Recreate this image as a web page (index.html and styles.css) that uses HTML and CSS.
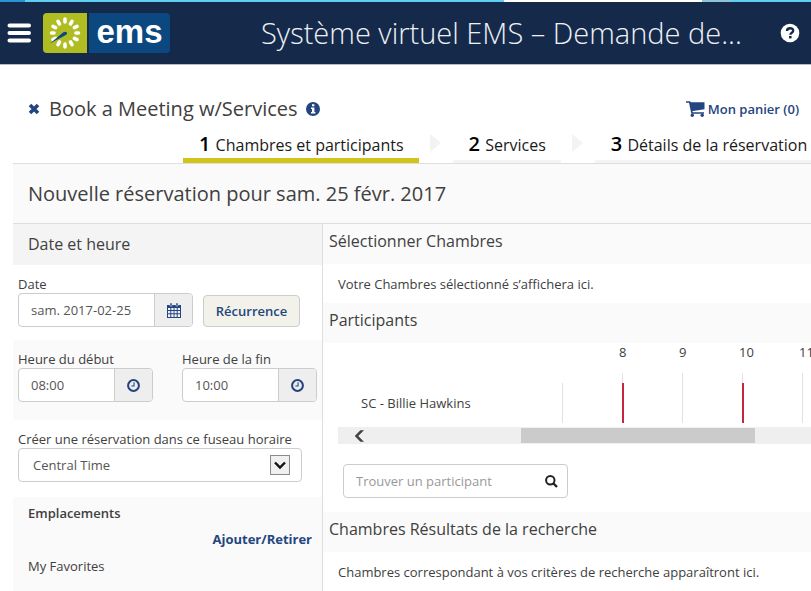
FILE: index.html
```html
<!DOCTYPE html>
<html lang="fr">
<head>
<meta charset="utf-8">
<meta name="viewport" content="width=device-width, initial-scale=1">
<title>Système virtuel EMS</title>
<link rel="stylesheet" href="styles.css">
</head>
<body>
<svg class="sprite" width="0" height="0" aria-hidden="true">
  <symbol id="clock" viewBox="0 0 12 12">
    <circle cx="6" cy="6" r="5" fill="none" stroke="currentColor" stroke-width="1.900"/>
    <path d="M6.500 3v3.500H4" fill="none" stroke="currentColor" stroke-width="1"/>
  </symbol>
</svg>

<div class="strip"><span class="strip-a"></span><span class="strip-b"></span><span class="strip-c"></span><span class="strip-d"></span><span class="strip-e"></span></div>

<header class="topbar">
  <button class="icon-btn menu" type="button" aria-label="Menu">
    <svg width="24" height="20" viewBox="0 0 24 20"><path d="M2.500 2.500h19.500M2.500 10h19.500M2.500 17.500h19.500" stroke="#fff" stroke-width="4" stroke-linecap="round"/></svg>
  </button>
  <a class="logo" href="#">
    <span class="logo-mark">
      <svg width="44" height="40" viewBox="0 0 44 40">
        <g stroke="#fff" stroke-width="3.600" stroke-linecap="round">
          <path d="M22 6v3M22 31v3M8.500 20h2.500M33 20h2.500"/>
          <path d="M15 8.400l1.500 2.600M29 8.400l-1.500 2.600M15 31.600l1.500-2.600M29 31.600l-1.500-2.600"/>
          <path d="M10 13.300l2.600 1.400M34 13.300l-2.600 1.400M10 26.700l2.600-1.400M34 26.700l-2.600-1.400"/>
        </g>
        <path d="M7 30.500L20 19.500c2-1.600 4.500-.6 4 1-.3 1-1.200 1.500-2 2z" fill="#0b4880"/>
      </svg>
    </span>
    <span class="logo-word">ems</span>
  </a>
  <h1>Système virtuel EMS – Demande de...</h1>
  <button class="icon-btn" type="button" aria-label="Aide">
    <svg width="20" height="20" viewBox="0 0 20 20"><circle cx="10" cy="10" r="9.300" fill="#fff"/><path d="M7 8c0-3.600 6.200-3.600 6.200-.3 0 2-2.800 2-2.800 4" fill="none" stroke="#152a4b" stroke-width="2.400"/><rect x="9" y="13" width="2.600" height="2.400" fill="#152a4b"/></svg>
  </button>
</header>

<main>
  <div class="booking">
    <button class="icon-btn" type="button" aria-label="Fermer">
      <svg width="12" height="12" viewBox="0 0 12 12"><path d="M2 2l8 8M10 2l-8 8" stroke="#24457f" stroke-width="3.600"/></svg>
    </button>
    <h2>Book a Meeting w/Services</h2>
    <button class="icon-btn" type="button" aria-label="Informations">
      <svg width="14" height="14" viewBox="0 0 14 14"><circle cx="7" cy="7" r="7" fill="#24457f"/><path d="M6 2.300h2.400v2H6zM5 5.500h3.400v4.500h1v1.500H5V10h1V7H5z" fill="#fff"/></svg>
    </button>
    <a class="cart" href="#">
      <svg width="19" height="18" viewBox="0 0 19 18"><path d="M0 2h3.700l2.300 11h12" fill="none" stroke="#24457f" stroke-width="1.600"/><path d="M3.800 2.300h14.700v7L5.500 11.300z" fill="#24457f"/><circle cx="6.300" cy="15.300" r="1.700" fill="#24457f"/><circle cx="16.200" cy="15.300" r="1.700" fill="#24457f"/></svg>
      Mon panier (0)
    </a>
  </div>

  <nav class="steps">
    <a class="step active" href="#"><b>1</b> Chambres et participants</a>
    <svg class="arrow" width="11" height="18" viewBox="0 0 11 18"><path d="M0 0l11 9-11 9z" fill="#f3f3f3"/></svg>
    <a class="step second" href="#"><b>2</b> Services</a>
    <svg class="arrow" width="11" height="18" viewBox="0 0 11 18"><path d="M0 0l11 9-11 9z" fill="#f3f3f3"/></svg>
    <a class="step last" href="#"><b>3</b> Détails de la réservation</a>
  </nav>

  <h2 class="heading">Nouvelle réservation pour sam. 25 févr. 2017</h2>

  <div class="columns">
    <form class="criteria">
      <h3>Date et heure</h3>
      <section class="row date">
        <div class="field">
          <label for="date">Date</label>
          <div class="group">
            <input id="date" type="text" value="sam. 2017-02-25">
            <button type="button" aria-label="Calendrier">
              <svg width="14" height="15" viewBox="0 0 14 15"><path d="M0 2h14v13H0z" fill="#24457f"/><path d="M3 0h2v3H3zM9 0h2v3H9z" fill="#24457f" stroke="#eee" stroke-width=".5"/><path d="M1 5h2.300v2H1zM4.300 5h2.300v2H4.300zM7.500 5h2.200v2H7.500zM10.700 5H13v2h-2.300zM1 8h2.300v2.300H1zM4.300 8h2.300v2.300H4.300zM7.500 8h2.200v2.300H7.500zM10.700 8H13v2.300h-2.300zM1 11.300h2.300V14H1zM4.300 11.300h2.300V14H4.300zM7.500 11.300h2.200V14H7.500zM10.700 11.300H13V14h-2.300z" fill="#f1f3f8"/></svg>
            </button>
          </div>
        </div>
        <button class="recurrence" type="button">Récurrence</button>
      </section>
      <section class="row times">
        <div class="field">
          <label for="start">Heure du début</label>
          <div class="group">
            <input id="start" type="text" value="08:00">
            <button type="button" aria-label="Choisir le début"><svg width="13" height="13"><use href="#clock"/></svg></button>
          </div>
        </div>
        <div class="field">
          <label for="end">Heure de la fin</label>
          <div class="group">
            <input id="end" type="text" value="10:00">
            <button type="button" aria-label="Choisir la fin"><svg width="13" height="13"><use href="#clock"/></svg></button>
          </div>
        </div>
      </section>
      <section class="row zone">
        <div class="field">
          <label for="zone">Créer une réservation dans ce fuseau horaire</label>
          <div class="select">
            <select id="zone"><option>Central Time</option></select>
            <svg width="20" height="20" viewBox="0 0 20 20"><rect x=".5" y=".5" width="19" height="19" fill="#f0f0f0" stroke="#8a8a8a"/><path d="M5 7.500l5 5 5-5" fill="none" stroke="#111" stroke-width="2.400"/></svg>
          </div>
        </div>
      </section>
      <section class="locations">
        <h4>Emplacements</h4>
        <a href="#">Ajouter/Retirer</a>
        <p>My Favorites</p>
      </section>
    </form>

    <div class="results">
      <h3>Sélectionner Chambres</h3>
      <p>Votre Chambres sélectionné s’affichera ici.</p>
      <h3>Participants</h3>
      <div class="timeline">
        <div class="name">SC - Billie Hawkins</div>
        <div class="hour first"></div>
        <div class="hour edge"><span>8</span></div>
        <div class="hour"><span>9</span></div>
        <div class="hour edge"><span>10</span></div>
        <div class="hour"><span>11</span></div>
      </div>
      <div class="scroller">
        <button class="icon-btn" type="button" aria-label="Défiler à gauche"><svg width="9" height="12" viewBox="0 0 9 12"><path d="M8.500.5L3 6l5.500 5.500H5.300L0 6 5.300.5z" fill="#444" stroke="#444" stroke-width=".5"/></svg></button>
        <div class="thumb"></div>
      </div>
      <div class="search">
        <input type="text" placeholder="Trouver un participant" aria-label="Trouver un participant">
        <button class="icon-btn" type="button" aria-label="Rechercher"><svg width="13" height="13" viewBox="0 0 13 13"><circle cx="5.300" cy="5.300" r="4.200" fill="none" stroke="#222" stroke-width="2"/><path d="M8.500 8.500l3.500 3.500" stroke="#222" stroke-width="2.400"/></svg></button>
      </div>
      <h3>Chambres Résultats de la recherche</h3>
      <p>Chambres correspondant à vos critères de recherche apparaîtront ici.</p>
    </div>
  </div>
</main>
</body>
</html>
```

FILE: styles.css
```css
* { box-sizing: border-box; }

body {
  margin: 0;
  min-height: 100vh;
  display: flex;
  flex-direction: column;
  overflow: hidden;
  background: #fff;
  color: #404040;
  font: 13px/20px "Open Sans", "Noto Sans", sans-serif;
}

h1, h2, h3, h4, p { margin: 0; font-weight: 400; }
a { color: #24457f; text-decoration: none; }
input, select, button { font: inherit; color: inherit; }
svg { display: block; flex: none; }
.sprite { position: absolute; }

.icon-btn {
  display: flex;
  flex: none;
  padding: 0;
  border: 0;
  background: none;
  cursor: pointer;
}

.strip { display: flex; height: 2px; }
.strip-a { flex: 25; background: #2a93d0; }
.strip-b { flex: 479; background: #60cdf2; }
.strip-c { flex: 198; background: #fff; }
.strip-d { flex: 29; background: #8fc4d6; }
.strip-e { flex: 80; background: #60cdf2; }

.topbar {
  display: flex;
  align-items: center;
  height: 63px;
  padding: 0 11px 0 7px;
  background: #152a4b;
  border-bottom: 1px solid #b4bac6;
}
.logo { display: flex; gap: 2px; margin-left: 12px; height: 40px; }
.logo-mark { background: #afbd22; border-radius: 4px 0 0 4px; }
.logo-word {
  width: 81px;
  background: #0b4880;
  border-radius: 0 4px 4px 0;
  color: #fff;
  font: bold 33px/38px "Liberation Sans", sans-serif;
  text-align: center;
}
.topbar h1 {
  flex: 1;
  margin-left: 91px;
  color: #eef1f6;
  font-size: 29px;
  font-weight: 300;
  line-height: 40px;
  white-space: nowrap;
}

main { flex: 1; display: flex; flex-direction: column; margin-left: 13px; }

.booking {
  display: flex;
  align-items: center;
  height: 60px;
  padding: 28px 12px 0 15px;
}
.booking h2 { margin: 0 8px 0 9px; font-size: 20px; line-height: 28px; }
.cart {
  display: flex;
  align-items: center;
  gap: 3px;
  margin-left: auto;
  font-weight: 600;
  white-space: nowrap;
}

.steps {
  display: flex;
  height: 38px;
  margin-left: 170px;
  white-space: nowrap;
}
.step {
  padding: 7px 15px 0 16px;
  border-bottom: 3px solid #f4f4f4;
  color: #1a1a1a;
  font-size: 16px;
  line-height: 24px;
}
.step b { margin-right: 1px; font-size: 20px; font-weight: 600; color: #000; }
.step.active { border-bottom: 5px solid #d2c31a; }
.step.last { flex: 1; }
.arrow { margin: 9px 12px 0 11px; }

.heading {
  padding: 15px 15px 14px;
  border: solid #dedede;
  border-width: 1px 0;
  background: #fafafa;
  font-size: 20px;
  line-height: 30px;
}

.columns { flex: 1; display: flex; }
h3 { font-size: 16px; line-height: 24px; }

.criteria {
  flex: none;
  width: 310px;
  display: flex;
  flex-direction: column;
  border-right: 1px solid #dedede;
}
.criteria h3 { padding: 8px 15px 9px; background: #f4f4f4; }
.row { display: flex; align-items: flex-end; padding: 9px 5px 0; }
.date { height: 75px; gap: 10px; padding-bottom: 13px; }
.times { height: 80px; gap: 29px; padding-bottom: 18px; background: #fafafa; }
.zone { height: 77px; padding-bottom: 15px; }
.field label { display: block; line-height: 18px; }

.group {
  display: flex;
  width: 135px;
  height: 34px;
  border: 1px solid #ccc;
  border-radius: 4px;
  background: #fff;
  overflow: hidden;
}
.date .group { width: 175px; }
.group input {
  flex: 1;
  min-width: 0;
  padding: 0 12px;
  border: 0;
  outline: 0;
  background: none;
  color: #555;
}
.group button {
  display: grid;
  place-items: center;
  width: 38px;
  padding: 0;
  border: 0;
  border-left: 1px solid #ccc;
  background: #eee;
  color: #24457f;
}
.recurrence {
  width: 97px;
  height: 32px;
  padding: 0;
  border: 1px solid #ccc;
  border-radius: 4px;
  background: #f2f2ea;
  color: #24457f;
  font-weight: 600;
}

.select { position: relative; width: 284px; }
.select select {
  width: 100%;
  height: 34px;
  padding: 0 14px;
  border: 1px solid #ccc;
  border-radius: 4px;
  background: #fff;
  color: #555;
  appearance: none;
}
.select svg { position: absolute; right: 12px; top: 7px; pointer-events: none; }

.locations {
  flex: 1;
  display: flex;
  flex-direction: column;
  gap: 6px;
  padding: 6px 10px 0 15px;
  background: #fafafa;
}
.locations h4 { font-weight: 600; }
.locations a { align-self: flex-end; font-weight: 700; }
.locations p { margin-top: 1px; }

.results { flex: 1; min-width: 0; }
.results h3 { height: 40px; padding: 5px 6px 0; background: #fafafa; }
.results p { padding: 10px 15px 9px; }

.timeline {
  display: flex;
  align-items: flex-end;
  height: 80px;
  overflow: hidden;
}
.name { flex: none; width: 239px; padding: 0 38px 10px; white-space: nowrap; }
.hour {
  position: relative;
  flex: none;
  width: 60px;
  height: 50px;
  border-left: 1px solid #e2e2e2;
}
.hour.first { height: 40px; }
.hour span { position: absolute; left: -4px; top: -31px; }
.hour.edge::before {
  content: "";
  position: absolute;
  left: -1px;
  bottom: 0;
  width: 2px;
  height: 40px;
  background: #c4273a;
}

.scroller {
  display: flex;
  align-items: center;
  height: 17px;
  margin: 4px 0 20px 15px;
  padding-left: 17px;
  background: #efefef;
}
.thumb { width: 234px; height: 15px; margin-left: 157px; background: #cbcbcb; }

.search {
  display: flex;
  align-items: center;
  width: 225px;
  height: 34px;
  margin: 0 0 14px 20px;
  padding: 0 9px 0 12px;
  border: 1px solid #ccc;
  border-radius: 4px;
}
.search input { flex: 1; min-width: 0; padding: 0; border: 0; outline: 0; }
.search input::placeholder { color: #999; }
```
